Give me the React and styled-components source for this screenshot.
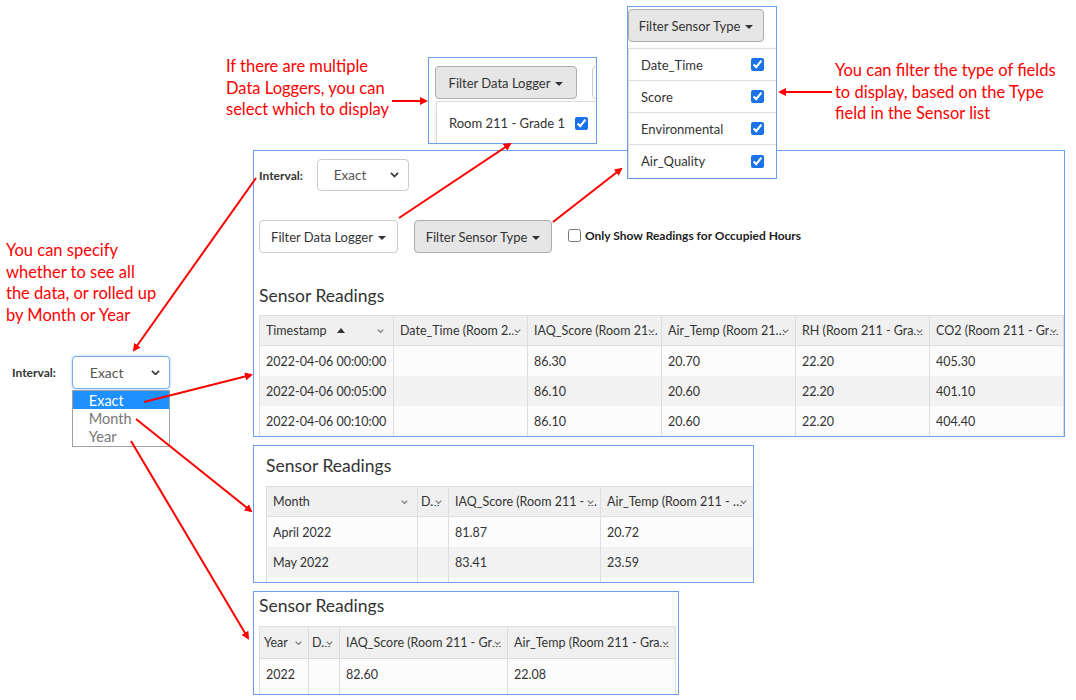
import React from 'react';
import styled, { createGlobalStyle } from 'styled-components';

const GlobalStyle = createGlobalStyle`
  html, body {
    margin: 0;
    padding: 0;
    background: #fff;
  }
  body {
    font-family: Lato, "Open Sans", Arial, sans-serif;
    color: #333;
  }
`;

const Canvas = styled.div`
  position: relative;
  width: 1076px;
  height: 700px;
  overflow: hidden;
  background: #fff;
`;

// each screenshot crop is pinned on the annotation canvas
const Frame = styled.div`
  position: absolute;
  left: ${p => p.$x}px;
  top: ${p => p.$y}px;
  width: ${p => p.$w}px;
  height: ${p => p.$h}px;
  box-sizing: border-box;
  padding: ${p => p.$pad || '0'};
  border: 1px solid #6d9eeb;
  background: #fff;
  overflow: hidden;
`;

const Note = styled.div`
  position: absolute;
  left: ${p => p.$x}px;
  top: ${p => p.$y}px;
  color: #ff0000;
  font-family: Lato, "Liberation Sans", sans-serif;
  font-size: 16.5px;
  line-height: 21.5px;
  white-space: nowrap;
`;

const Arrows = styled.svg`
  position: absolute;
  left: 0;
  top: 0;
  pointer-events: none;
`;

const Row = styled.div`
  display: flex;
  align-items: ${p => p.$align || 'center'};
  gap: ${p => p.$gap || 0}px;
  margin-top: ${p => p.$mt || 0}px;
`;

const Label = styled.span`
  font-weight: 700;
  font-size: 12px;
  color: #333;
`;

const FakeSelect = styled.div`
  box-sizing: border-box;
  width: ${p => p.$w}px;
  height: ${p => p.$h}px;
  display: flex;
  align-items: center;
  justify-content: space-between;
  padding: 0 9px 0 ${p => p.$pl || 16}px;
  border: 1px solid ${p => (p.$focus ? '#79aaeb' : '#ccc')};
  border-radius: 4px;
  box-shadow: ${p => (p.$focus ? '0 0 3px rgba(102,175,233,0.6)' : 'none')};
  background: #fff;
  font-size: ${p => p.$fs || 14}px;
  color: #555;
`;

const Button = styled.div`
  box-sizing: border-box;
  width: ${p => p.$w}px;
  height: 33px;
  flex: none;
  display: flex;
  align-items: center;
  justify-content: center;
  border: 1px solid ${p => (p.$active ? '#adadad' : '#ccc')};
  border-radius: 4px;
  background: ${p => (p.$active ? '#e6e6e6' : '#fff')};
  font-size: 13px;
  color: #333;
  white-space: nowrap;
`;

const Caret = styled.span`
  display: inline-block;
  margin-left: 5px;
  margin-top: 2px;
  border-top: 4px solid #333;
  border-left: 4px solid transparent;
  border-right: 4px solid transparent;
`;

const Check = styled.input`
  width: 13px;
  height: 13px;
  margin: 0;
  flex: none;
  accent-color: #1a73e8;
`;

const CheckLabel = styled.label`
  display: flex;
  align-items: center;
  gap: 4px;
  margin-top: 8px;
  font-weight: 700;
  font-size: 12px;
  color: #222;
`;

const Title = styled.div`
  font-size: 17.5px;
  line-height: 20px;
  color: #333;
  margin: ${p => p.$mt || 0}px 0 ${p => p.$mb || 10}px;
`;

const Grid = styled.div`
  display: grid;
  grid-template-columns: ${p => p.$cols};
  width: fit-content;
  border-top: 1px solid #ddd;
  border-left: 1px solid #ddd;
`;

const HeadCell = styled.div`
  position: relative;
  box-sizing: border-box;
  height: ${p => p.$h}px;
  display: flex;
  align-items: center;
  padding: 0 3px 0 ${p => p.$px}px;
  background: #f0f0f0;
  border-right: 1px solid #ddd;
  border-bottom: 1px solid #ddd;
  font-size: 12.5px;
  color: #333;
  min-width: 0;
`;

const HeadText = styled.span`
  overflow: hidden;
  white-space: nowrap;
  text-overflow: ellipsis;
  min-width: 0;
`;

// the column menu chevron sits over the end of the header text
const HeadIcon = styled.span`
  position: absolute;
  right: ${p => p.$r}px;
  top: 50%;
  margin-top: -3px;
  display: flex;
  background: ${p => (p.$plain ? 'transparent' : '#f0f0f0')};
  padding: 1px;
`;

const SortUp = styled.span`
  margin-left: 10px;
  border-bottom: 5px solid #333;
  border-left: 4px solid transparent;
  border-right: 4px solid transparent;
`;

const BodyCell = styled.div`
  box-sizing: border-box;
  height: ${p => p.$h}px;
  display: flex;
  align-items: center;
  padding: 0 6px;
  background: ${p => (p.$alt ? '#f2f2f2' : '#fcfcfc')};
  border-right: 1px solid #ddd;
  font-size: 12.5px;
  color: #333;
  white-space: nowrap;
`;

const Menu = styled.div`
  margin: ${p => p.$m || '0'};
  border-top: 1px solid #ddd;
  border-left: 1px solid #ddd;
  box-shadow: 0 2px 5px rgba(0, 0, 0, 0.12);
  background: #fff;
`;

const MenuItem = styled.div`
  box-sizing: border-box;
  height: ${p => p.$h}px;
  display: flex;
  align-items: center;
  justify-content: ${p => (p.$spread ? 'space-between' : 'flex-start')};
  gap: 10px;
  padding: 0 12px;
  border-bottom: ${p => (p.$line ? '1px solid #ddd' : 'none')};
  font-size: 13px;
  color: #333;
  white-space: nowrap;
`;

const Stub = styled.div`
  width: 40px;
  height: 33px;
  flex: none;
  box-sizing: border-box;
  border: 1px solid #ccc;
  border-radius: 4px;
`;

const IntervalBox = styled.div`
  position: absolute;
  left: 12px;
  top: 356px;
  display: flex;
  align-items: center;
  gap: 16px;
`;

const SelectWrap = styled.div`
  position: relative;
`;

const OptionList = styled.div`
  position: absolute;
  left: 0;
  top: 34px;
  width: 98px;
  box-sizing: border-box;
  border: 1px solid #a0a0a0;
  background: #fff;
`;

const Option = styled.div`
  height: 18.3px;
  display: flex;
  align-items: center;
  padding-left: 16px;
  font-size: 14.5px;
  background: ${p => (p.$on ? '#1e90ff' : '#fff')};
  color: ${p => (p.$on ? '#fff' : '#777')};
`;

const Chevron = ({ size = 8, color = '#777', stroke = 1.3 }) => (
  <svg width={size} height={size * 0.6} viewBox="0 0 10 6" style={{ flex: 'none' }}>
    <polyline points="1,1 5,5 9,1" fill="none" stroke={color} strokeWidth={stroke * 1.25} />
  </svg>
);

const Head = ({ text, h, px, sort, wide }) => (
  <HeadCell $h={h} $px={px}>
    <HeadText>{text}</HeadText>
    {sort && <SortUp />}
    <HeadIcon $r={wide ? 8 : 5} $plain={wide}>
      <Chevron size={7} />
    </HeadIcon>
  </HeadCell>
);

const Table = ({ cols, heads, rows, headH = 30, rowH = 30, px = 6, tail }) => (
  <Grid $cols={cols}>
    {heads.map((hd, i) => (
      <Head key={'h' + i} text={hd.t} sort={hd.sort} wide={hd.wide} h={headH} px={hd.px ?? px} />
    ))}
    {rows.map((r, ri) =>
      r.map((c, ci) => (
        <BodyCell key={ri + '-' + ci} $h={rowH} $alt={ri % 2 === 1}>
          {c}
        </BodyCell>
      ))
    )}
    {tail &&
      heads.map((_, i) => <BodyCell key={'t' + i} $h={rowH} $alt={false} />)}
  </Grid>
);

const mainHeads = [
  { t: 'Timestamp', sort: true, wide: true },
  { t: 'Date_Time (Room 211 - Grade 1)' },
  { t: 'IAQ_Score (Room 211 - Grade 1)' },
  { t: 'Air_Temp (Room 211 - Grade 1)' },
  { t: 'RH (Room 211 - Grade 1)' },
  { t: 'CO2 (Room 211 - Grade 1)' },
];

const mainRows = [
  ['2022-04-06 00:00:00', '', '86.30', '20.70', '22.20', '405.30'],
  ['2022-04-06 00:05:00', '', '86.10', '20.60', '22.20', '401.10'],
  ['2022-04-06 00:10:00', '', '86.10', '20.60', '22.20', '404.40'],
];

const monthHeads = [
  { t: 'Month', wide: true },
  { t: 'Date_Time', px: 3 },
  { t: 'IAQ_Score (Room 211 - Grade 1)' },
  { t: 'Air_Temp (Room 211 - Grade 1)' },
];

const monthRows = [
  ['April 2022', '', '81.87', '20.72'],
  ['May 2022', '', '83.41', '23.59'],
];

const yearHeads = [
  { t: 'Year', px: 4 },
  { t: 'Date_Time', px: 3 },
  { t: 'IAQ_Score (Room 211 - Grade 1)' },
  { t: 'Air_Temp (Room 211 - Grade 1)' },
];

const yearRows = [['2022', '', '82.60', '22.08']];

const arrows = [
  [392, 101, 426, 101],
  [399, 218, 510, 144],
  [553, 222, 621, 169],
  [832, 92, 780, 92],
  [256, 178, 134, 350],
  [144, 402, 251, 375],
  [136, 419, 251, 511],
  [131, 441, 248, 638],
];

const sensorTypes = ['Date_Time', 'Score', 'Environmental', 'Air_Quality'];

export default function App() {
  return (
    <Canvas>
      <GlobalStyle />

      <Note $x={226} $y={56}>
        If there are multiple
        <br />
        Data Loggers, you can
        <br />
        select which to display
      </Note>
      <Note $x={6} $y={240}>
        You can specify
        <br />
        whether to see all
        <br />
        the data, or rolled up
        <br />
        by Month or Year
      </Note>
      <Note $x={835} $y={60}>
        You can filter the type of fields
        <br />
        to display, based on the Type
        <br />
        field in the Sensor list
      </Note>

      <Frame $x={253} $y={150} $w={812} $h={287} $pad="8px 0 0 5px">
        <Row $gap={14}>
          <Label>Interval:</Label>
          <FakeSelect $w={92} $h={32} $fs={13.5}>
            Exact <Chevron size={9} color="#444" stroke={1.6} />
          </FakeSelect>
        </Row>
        <Row $mt={29} $gap={16} $align="flex-start">
          <Button $w={139}>
            Filter Data Logger <Caret />
          </Button>
          <Button $w={138} $active>
            Filter Sensor Type <Caret />
          </Button>
          <CheckLabel>
            <Check type="checkbox" readOnly />
            Only Show Readings for Occupied Hours
          </CheckLabel>
        </Row>
        <Title $mt={33} $mb={9}>
          Sensor Readings
        </Title>
        <Table cols="134px 134px 134px 134px 134px 134px" heads={mainHeads} rows={mainRows} />
      </Frame>

      <Frame $x={428} $y={57} $w={169} $h={87} $pad="8px 0 0 6px">
        <Row $gap={15}>
          <Button $w={142} $active>
            Filter Data Logger <Caret />
          </Button>
          <Stub />
        </Row>
        <Menu $m="2px 0 0 1px">
          <MenuItem $h={42}>
            Room 211 - Grade 1
            <Check type="checkbox" checked readOnly />
          </MenuItem>
        </Menu>
      </Frame>

      <Frame $x={627} $y={6} $w={150} $h={173} $pad="2px 0 0 0">
        <Button $w={136} $active>
          Filter Sensor Type <Caret />
        </Button>
        <Menu $m="6px 0 0 0">
          {sensorTypes.map((s, i) => (
            <MenuItem key={s} $h={32} $spread $line={i < sensorTypes.length - 1}>
              {s}
              <Check type="checkbox" checked readOnly />
            </MenuItem>
          ))}
        </Menu>
      </Frame>

      <Frame $x={253} $y={445} $w={501} $h={138} $pad="10px 0 0 12px">
        <Title $mb={10}>Sensor Readings</Title>
        <Table cols="151px 31px 152px 153px" heads={monthHeads} rows={monthRows} tail />
      </Frame>

      <Frame $x={253} $y={591} $w={426} $h={104} $pad="4px 0 0 5px">
        <Title $mb={10}>Sensor Readings</Title>
        <Table cols="49px 31px 168px 168px" headH={32} heads={yearHeads} rows={yearRows} tail />
      </Frame>

      <IntervalBox>
        <Label>Interval:</Label>
        <SelectWrap>
          <FakeSelect $w={98} $h={33} $pl={17} $focus>
            Exact <Chevron size={9} color="#444" stroke={1.6} />
          </FakeSelect>
          <OptionList>
            <Option $on>Exact</Option>
            <Option>Month</Option>
            <Option>Year</Option>
          </OptionList>
        </SelectWrap>
      </IntervalBox>

      <Arrows width="1076" height="700" viewBox="0 0 1076 700">
        <defs>
          <marker id="head" markerWidth="8" markerHeight="8" refX="6" refY="4" orient="auto" markerUnits="userSpaceOnUse">
            <path d="M0,0 L8,4 L0,8 Z" fill="#ff0000" />
          </marker>
        </defs>
        {arrows.map(([x1, y1, x2, y2], i) => (
          <line key={i} x1={x1} y1={y1} x2={x2} y2={y2} stroke="#ff0000" strokeWidth="2" markerEnd="url(#head)" />
        ))}
      </Arrows>
    </Canvas>
  );
}
